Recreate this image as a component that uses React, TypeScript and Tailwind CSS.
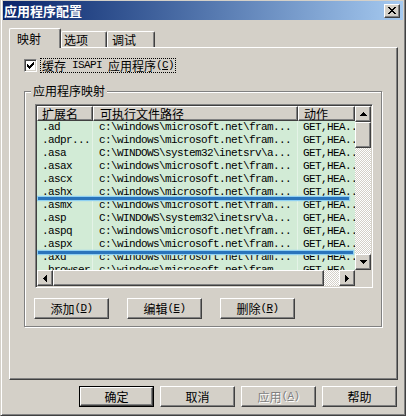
const cjk = "font-['Noto_Sans_CJK_SC',sans-serif]";
const mono = "font-['Liberation_Mono','Noto_Sans_CJK_SC',monospace]";
const raised =
  "border border-t-white border-l-white border-r-[#404040] border-b-[#404040] shadow-[inset_-1px_-1px_0_#808080]";
const sunken =
  "border border-t-[#808080] border-l-[#808080] border-r-white border-b-white shadow-[inset_1px_1px_0_#404040,inset_-1px_-1px_0_#d4d0c8]";
const track =
  "bg-[image:repeating-conic-gradient(#ffffff_0%_25%,#d4d0c8_0%_50%)] bg-[length:2px_2px]";

const FRAM = "c:\\windows\\microsoft.net\\fram...";
const SYS = "C:\\WINDOWS\\system32\\inetsrv\\a...";

const rows = [
  [".ad", FRAM],
  [".adpr...", FRAM],
  [".asa", SYS],
  [".asax", FRAM],
  [".ascx", FRAM],
  [".ashx", FRAM],
  [".asmx", FRAM],
  [".asp", SYS],
  [".aspq", FRAM],
  [".aspx", FRAM],
  [".axd", FRAM],
  [".browser", FRAM],
];

type Dir = "up" | "down" | "left" | "right";

const Arrow = ({ dir }: { dir: Dir }) => {
  const vertical = dir === "up" || dir === "down";
  const pts = {
    up: "3.5,0 7,4 0,4",
    down: "0,0 7,0 3.5,4",
    left: "4,0 4,7 0,3.5",
    right: "0,0 4,3.5 0,7",
  }[dir];
  return (
    <svg width={vertical ? 7 : 4} height={vertical ? 4 : 7} shapeRendering="crispEdges">
      <polygon points={pts} fill="#000" />
    </svg>
  );
};

const ScrollBtn = ({ dir }: { dir: Dir }) => (
  <div className={`w-[16px] h-[16px] shrink-0 bg-[#d4d0c8] flex items-center justify-center ${raised}`}>
    <Arrow dir={dir} />
  </div>
);

const Key = ({ k }: { k: string }) => (
  <span className={`${mono} text-[11px] tracking-[-0.6px]`}>
    (<span className="underline">{k}</span>)
  </span>
);

const Button = ({ label, k, isDefault, disabled }: { label: string; k?: string; isDefault?: boolean; disabled?: boolean }) => {
  const inner = (
    <div
      className={`w-full h-full bg-[#d4d0c8] flex items-center justify-center text-[12px] ${raised} ${
        disabled ? "text-[#808080] [text-shadow:1px_1px_0_#fff]" : "text-black"
      }`}
    >
      <span className={cjk}>{label}</span>
      {k && <Key k={k} />}
    </div>
  );
  if (isDefault) return <div className="w-[75px] h-[21px] border border-black">{inner}</div>;
  return <div className="w-[75px] h-[21px]">{inner}</div>;
};

const ListView = () => (
  <div className={`w-[338px] h-[184px] p-[1px] ${sunken}`}>
    <div className="grid grid-cols-[318px_16px] grid-rows-[164px_16px] w-full h-full">
      <div className="flex flex-col overflow-hidden">
        <div className={`flex h-[15px] shrink-0 text-[12px] leading-[13px] ${cjk}`}>
          <div className={`w-[56px] pl-[4px] bg-[#d4d0c8] ${raised}`}>扩展名</div>
          <div className={`w-[205px] pl-[6px] bg-[#d4d0c8] ${raised}`}>可执行文件路径</div>
          <div className={`w-[57px] pl-[5px] bg-[#d4d0c8] ${raised}`}>动作</div>
        </div>
        <div className="relative flex-1 overflow-hidden bg-[#d2ebd6]">
          {rows.map(([ext, path]) => (
            <div key={ext} className={`flex h-[13px] text-[11px] leading-[13px] tracking-[-0.6px] whitespace-nowrap ${mono}`}>
              <div className="w-[56px] pl-[5px] overflow-hidden border-r border-[#e4f3e7]">{ext}</div>
              <div className="w-[205px] pl-[6px] overflow-hidden border-r border-[#e4f3e7]">{path}</div>
              <div className="w-[57px] pl-[5px] overflow-hidden">GET,HEA..</div>
            </div>
          ))}
          <div className="absolute left-[1px] top-[76px] w-[311px] h-[3px] bg-[#2a74bb] shadow-[0_0_1px_1px_#8fd0f2]" />
          <div className="absolute left-[1px] top-[130px] w-[315px] h-[3px] bg-[#2a74bb] shadow-[0_0_1px_1px_#8fd0f2]" />
        </div>
      </div>
      <div className="flex flex-col">
        <ScrollBtn dir="up" />
        <div className={`h-[26px] shrink-0 bg-[#d4d0c8] ${raised}`} />
        <div className={`flex-1 ${track}`} />
        <ScrollBtn dir="down" />
      </div>
      <div className="flex">
        <ScrollBtn dir="left" />
        <div className={`w-[271px] shrink-0 bg-[#d4d0c8] ${raised}`} />
        <div className={`flex-1 ${track}`} />
        <ScrollBtn dir="right" />
      </div>
      <div className="bg-[#d4d0c8]" />
    </div>
  </div>
);

export default function App() {
  return (
    <div className="w-[406px] h-[416px] bg-[#d4d0c8] border-l border-r border-b border-l-[#d4d0c8] border-r-[#404040] border-b-[#404040] shadow-[inset_1px_0_0_#fff,inset_-1px_-1px_0_#808080] px-[2px] pt-[1px] flex flex-col overflow-hidden text-black">
      <div className="h-[19px] shrink-0 flex items-center justify-between bg-linear-to-r from-[#0a246a] to-[#a6caf0] pl-[1px] pr-[3px]">
        <span className={`text-white font-bold text-[13px] leading-[15px] ${cjk}`}>应用程序配置</span>
        <div className={`w-[16px] h-[14px] bg-[#d4d0c8] flex items-center justify-center ${raised}`}>
          <svg width="8" height="7" shapeRendering="crispEdges">
            <path d="M0 0h2l2 2.5 2-2.5h2l-3 3.5 3 3.5h-2l-2-2.5-2 2.5h-2l3-3.5z" fill="#000" />
          </svg>
        </div>
      </div>

      <div className={`mt-[8px] ml-[6px] h-[19px] flex items-end text-[12px] ${cjk}`}>
        <div className="relative z-10 -mb-px w-[52px] h-[20px] bg-[#d4d0c8] border-t border-l border-r border-t-white border-l-white border-r-[#404040] rounded-t-[2px] shadow-[inset_-1px_0_0_#808080] pl-[7px] pt-[3px] leading-[14px]">
          映射
        </div>
        <div className="w-[46px] h-[16px] border-t border-l border-r border-t-white border-l-white border-r-[#404040] rounded-t-[2px] shadow-[inset_-1px_0_0_#808080] pl-[2px] leading-[15px]">
          选项
        </div>
        <div className="w-[48px] h-[16px] border-t border-l border-r border-t-white border-l-white border-r-[#404040] rounded-t-[2px] shadow-[inset_-1px_0_0_#808080] pl-[4px] leading-[15px]">
          调试
        </div>
      </div>

      <div className={`ml-[6px] w-[389px] h-[333px] shrink-0 pl-[14px] pt-[10px] flex flex-col ${raised}`}>
        <div className="flex items-center h-[15px]">
          <div className={`w-[13px] h-[13px] bg-white flex items-center justify-center ${sunken}`}>
            <svg width="7" height="7" shapeRendering="crispEdges">
              <path d="M0 2h1v1h1v1h1v-1h1v-1h1v-1h1v-1h1v3h-1v1h-1v1h-1v1h-1v1h-1v-1h-1v-1h-1z" fill="#000" />
            </svg>
          </div>
          <div className="ml-[3px] h-[15px] px-[1px] border border-dotted border-black flex items-center text-[12px] leading-[13px]">
            <span className={cjk}>缓存</span>
            <span className={`${mono} text-[11px] tracking-[-0.6px] whitespace-pre`}> ISAPI </span>
            <span className={cjk}>应用程序</span>
            <Key k="C" />
          </div>
        </div>

        <div className="relative mt-[18px] w-[358px] h-[236px] border border-[#808080] shadow-[inset_1px_1px_0_#fff,1px_1px_0_#fff] pl-[10px] pt-[12px]">
          <span className={`absolute left-[6px] -top-[9px] px-[2px] bg-[#d4d0c8] text-[12px] leading-[16px] ${cjk}`}>应用程序映射</span>
          <ListView />
          <div className="mt-[10px] -ml-px flex gap-[18px]">
            <Button label="添加" k="D" />
            <Button label="编辑" k="E" />
            <Button label="删除" k="R" />
          </div>
        </div>
      </div>

      <div className="mt-[6px] ml-[76px] flex gap-[6px]">
        <Button label="确定" isDefault />
        <Button label="取消" />
        <Button label="应用" k="A" disabled />
        <Button label="帮助" />
      </div>
    </div>
  );
}
